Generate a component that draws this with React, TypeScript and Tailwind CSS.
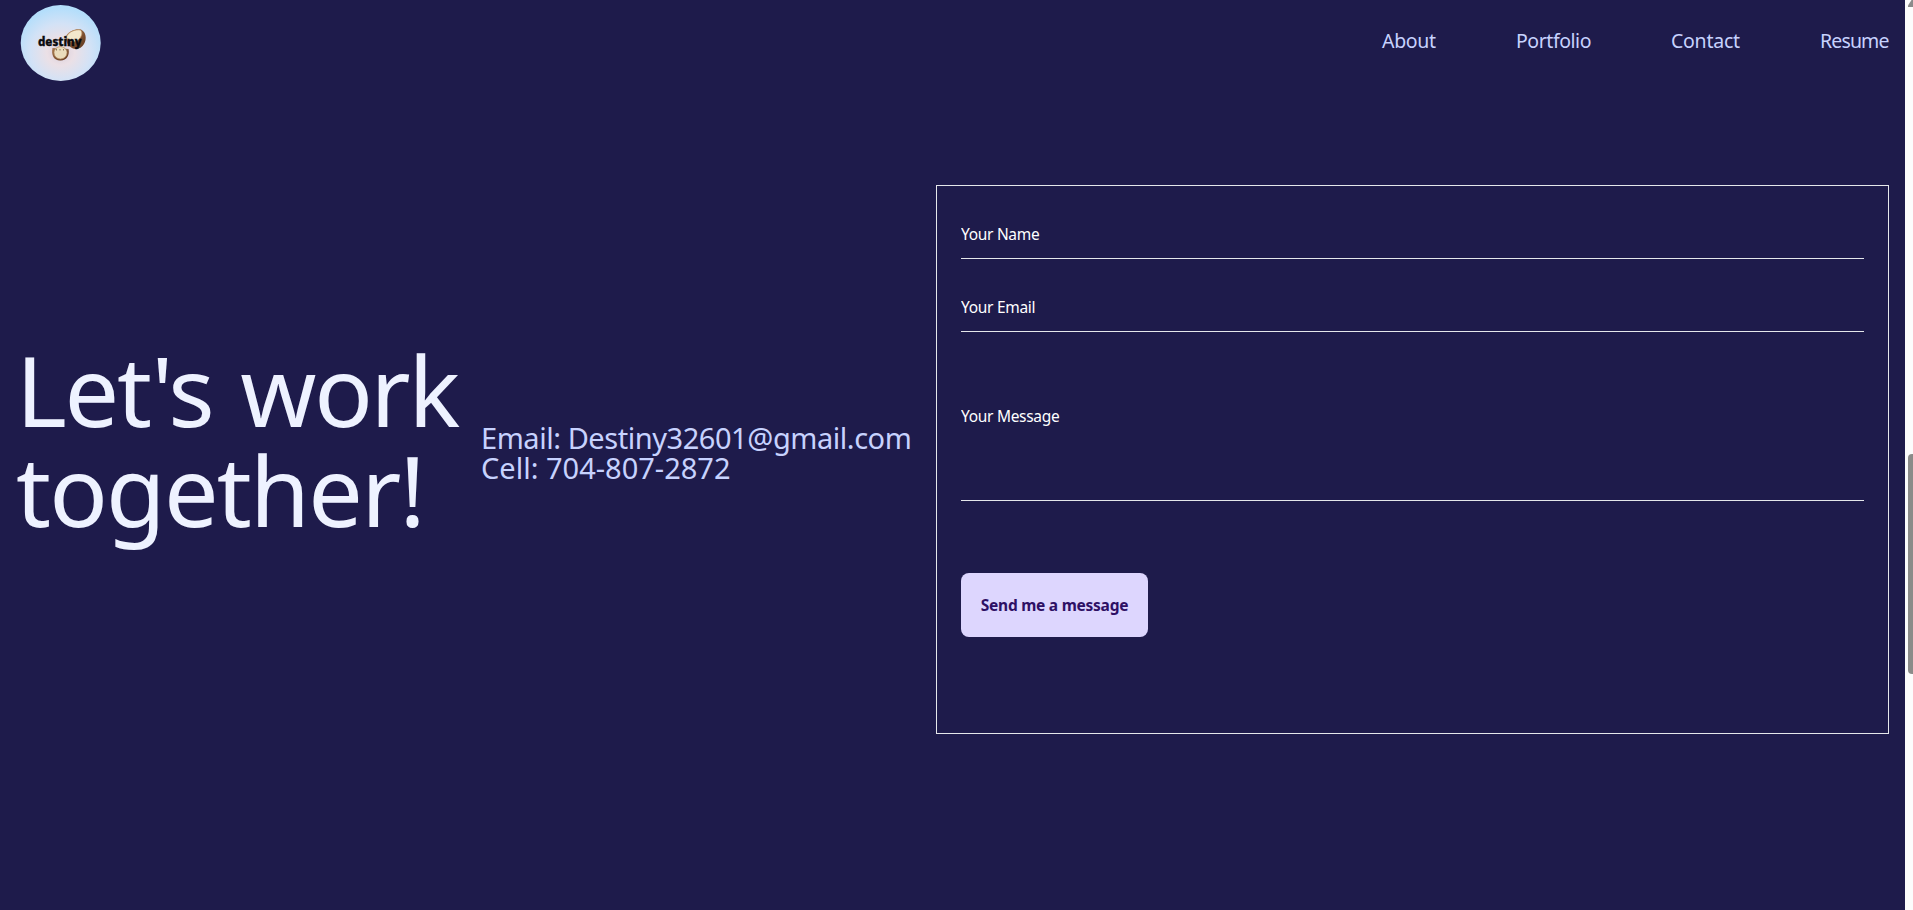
import React from "react";

const links = [
  { label: "About", cls: "w-[55px] mr-[79px] tracking-[-0.3px]" },
  { label: "Portfolio", cls: "w-[76px] mr-[79px] tracking-[-0.45px]" },
  { label: "Contact", cls: "w-[70px] mr-[79px] tracking-[-0.25px]" },
  { label: "Resume", cls: "w-[69px] tracking-[-0.85px]" },
];

function Logo() {
  return (
    <svg width="82" height="78" viewBox="0 0 82 78" className="mt-[4px] ml-[20px] block" aria-label="destiny">
      <defs>
        <radialGradient id="disc" cx="50%" cy="62%" r="58%">
          <stop offset="0" stopColor="#d9cedb" />
          <stop offset="0.3" stopColor="#ebe0e6" />
          <stop offset="0.65" stopColor="#d3e2f6" />
          <stop offset="1" stopColor="#b4defb" />
        </radialGradient>
        <linearGradient id="husk" x1="0" y1="0" x2="1" y2="1">
          <stop offset="0" stopColor="#a87a50" />
          <stop offset="1" stopColor="#5c321a" />
        </linearGradient>
      </defs>
      <ellipse cx="40.7" cy="39" rx="40" ry="38" fill="url(#disc)" />
      <path d="M46 32 C49 27 56 24.500 61 25.500 C66 28 67 35 64 40 C62 44 57 46 53 44.500 C48 42 45 37 46 32Z" fill="url(#husk)" />
      <path d="M46.500 33 C48 28 55 25 60.500 26 C63 28 62 33 58 36 C54 39 48 38.500 46.500 33Z" fill="#f3e8cc" stroke="#b98c60" strokeWidth="0.700" />
      <path d="M32.500 44 C31 51 34 56.500 40 56.500 C46.500 57 50 51 48.500 45Z" fill="url(#husk)" />
      <ellipse cx="40.500" cy="48.800" rx="6.500" ry="6.200" fill="#eadcbc" stroke="#b58b60" strokeWidth="0.700" />
      <text x="18" y="42" textLength="43.500" lengthAdjust="spacingAndGlyphs" fontFamily="'Noto Sans', sans-serif" fontWeight="800" fontSize="13" fill="#0a0a0e" stroke="#0a0a0e" strokeWidth="0.400">destiny</text>
      <g fill="#8d775c">
        <rect x="36" y="45" width="1" height="1.500" />
        <rect x="39.500" y="45" width="1" height="1.500" />
        <rect x="43" y="45" width="1" height="1.500" />
        <rect x="46.500" y="45" width="1" height="1.500" />
      </g>
    </svg>
  );
}

function Scrollbar() {
  return (
    <div className="flex h-full w-[8px] shrink-0 flex-col items-start overflow-hidden bg-[#fcfcfc] pl-[3px]">
      <svg width="8" height="8" viewBox="0 0 8 8" className="shrink-0">
        <path d="M0 7V5.500L3.500 0H8V7Z" fill="#8b8b8b" />
      </svg>
      <div className="mt-[446px] h-[220px] w-[9px] shrink-0 rounded-[4px] bg-[#8b8b89]" />
    </div>
  );
}

export default function App() {
  return (
    <div className="flex h-[910px] w-[1913px] overflow-hidden bg-[#1e1b4b] font-['Noto_Sans','Open_Sans',sans-serif]">
      <div className="flex min-w-0 flex-1 flex-col">
        <header className="flex h-[88px] items-start justify-between pr-[16px]">
          <Logo />
          <nav className="flex pt-[27px] text-[19.5px] leading-[28px] whitespace-nowrap text-[#c7d2fe]">
            {links.map((link) => (
              <a key={link.label} href="#" className={link.cls}>
                {link.label}
              </a>
            ))}
          </nav>
        </header>
        <main className="flex items-start pt-[97px] pl-[16px]">
          <h1 className="mt-[154px] w-[465px] text-[97px] leading-[100px] font-normal whitespace-nowrap text-[#eef2ff]">
            <span className="tracking-[-2.3px] [word-spacing:5px]">Let's work</span>
            <br />
            <span className="tracking-[-1.8px]">together!</span>
          </h1>
          <p className="mt-[238px] w-[455px] text-[29px] leading-[30px] whitespace-nowrap text-[#c7d2fe]">
            <span className="tracking-[-0.45px]">Email: Destiny32601@gmail.com</span>
            <br />
            <span>Cell: 704-807-2872</span>
          </p>
          <form className="flex h-[549px] w-[953px] flex-col items-start border border-[#e5e7eb] p-6">
            <input
              placeholder="Your Name"
              className="mb-6 h-[49px] w-full border-b border-[#e5e7eb] text-[15.5px] tracking-[-0.3px] placeholder:text-white"
            />
            <input
              placeholder="Your Email"
              className="mb-6 h-[49px] w-full border-b border-[#e5e7eb] text-[15.5px] tracking-[-0.3px] placeholder:text-white"
            />
            <textarea
              placeholder="Your Message"
              rows={2}
              className="h-[145px] w-full resize-none border-b border-[#e5e7eb] py-12 text-[15.5px] leading-[24px] tracking-[-0.3px] placeholder:text-white"
            />
            <button
              type="button"
              className="mt-[72px] h-16 w-[187px] rounded-lg bg-[#ddd6fe] pt-[2px] text-[15.5px] font-bold tracking-[-0.25px] whitespace-nowrap text-[#2e1065]"
            >
              Send me a message
            </button>
          </form>
        </main>
      </div>
      <Scrollbar />
    </div>
  );
}
